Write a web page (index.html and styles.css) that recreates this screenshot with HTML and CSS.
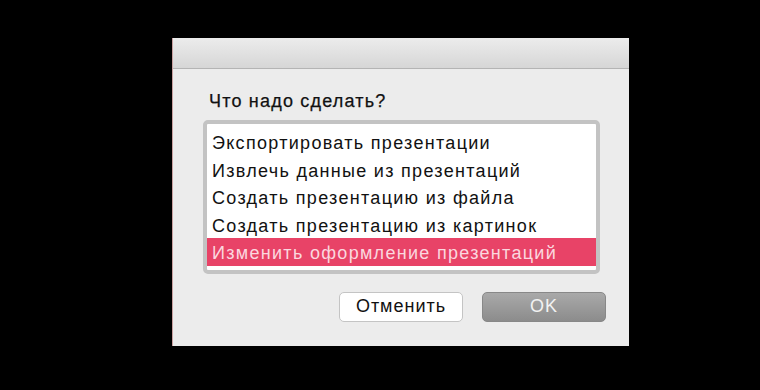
FILE: index.html
```html
<!DOCTYPE html>
<html>
<head>
  <meta charset="UTF-8">
  <title>Что надо сделать?</title>
  <link rel="stylesheet" href="styles.css">
</head>
<body>
  <div class="dialog">
    <div class="titlebar"></div>
    <div class="dialog-body">
      <div class="prompt">Что надо сделать?</div>
      <div class="list">
        <div class="item">Экспортировать презентации</div>
        <div class="item">Извлечь данные из презентаций</div>
        <div class="item">Создать презентацию из файла</div>
        <div class="item">Создать презентацию из картинок</div>
        <div class="item selected">Изменить оформление презентаций</div>
      </div>
      <div class="buttons">
        <button class="btn btn-cancel">Отменить</button>
        <button class="btn btn-ok">OK</button>
      </div>
    </div>
  </div>
</body>
</html>
```

FILE: styles.css
```css
body {
  margin: 0;
  background: #000;
  font-family: 'Liberation Sans', Arial, sans-serif;
  height: 390px;
  overflow: hidden;
}
.dialog {
  width: 457px;
  height: 308px;
  margin: 38px 0 0 172px;
  background: #ececec;
  box-sizing: border-box;
  border-left: 1px solid #c9a0a0;
}
.titlebar {
  height: 30px;
  background: linear-gradient(#ececec, #d6d6d6);
  border-bottom: 1px solid #b4b4b4;
}
.dialog-body {
  padding: 22px 0 0 30px;
}
.prompt {
  font-size: 18px;
  letter-spacing: 1.2px;
  color: #111;
  -webkit-text-stroke: 0.25px #111;
  margin: 0 0 8px 6px;
}
.list {
  border: 4px solid #c3c3c3;
  border-radius: 5px;
  background: #fff;
  width: 389px;
  padding: 4px 0;
}
.item {
  height: 25.5px;
  line-height: 27.5px;
  padding: 2px 0 0 5px;
  font-size: 18px;
  letter-spacing: 1.3px;
  color: #111;
}
.item.selected {
  background: #e84367;
  color: #fbd7df;
}
.buttons {
  display: flex;
  justify-content: flex-end;
  gap: 19px;
  margin-top: 18px;
  padding-right: 23px;
}
.btn {
  height: 30px;
  width: 124px;
  border-radius: 5px;
  font-family: 'Liberation Sans', Arial, sans-serif;
  font-size: 18px;
  letter-spacing: 1px;
  padding: 0;
}
.btn-cancel {
  background: #fff;
  border: 1px solid #c4c4c4;
  color: #111;
}
.btn-ok {
  background: linear-gradient(#a9a9a9, #8c8c8c);
  border: 1px solid #888;
  color: #f2f2f2;
}
```
